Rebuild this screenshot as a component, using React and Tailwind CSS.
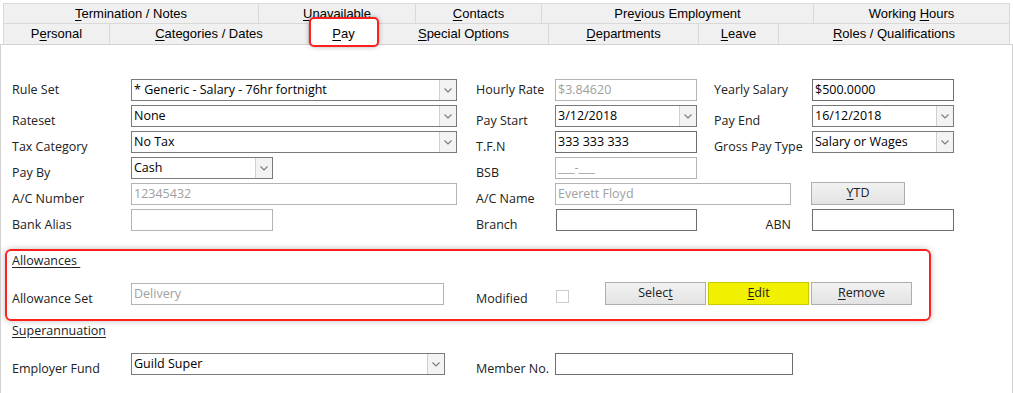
import React from 'react'

const font = { fontFamily: '"Open Sans", "Noto Sans", sans-serif' }

const Chevron = () => (
  <svg width="8" height="5" viewBox="0 0 8 5" fill="none">
    <path d="M0.5 0.5 L4 4 L7.5 0.5" stroke="#7a7a7a" strokeWidth="1.1" />
  </svg>
)

const Combo = ({ value, w }) => (
  <div className={`flex h-[22px] shrink-0 border border-[#7a7a7a] bg-white ${w}`}>
    <div className="flex-1 truncate px-[2px] text-[12.5px] leading-[19px] text-black">{value}</div>
    <div className="flex w-[17px] items-center justify-center border-l border-[#d0d0d0] bg-[#f3f3f3]">
      <Chevron />
    </div>
  </div>
)

const Field = ({ value, w, dis }) => (
  <div
    className={`h-[22px] shrink-0 border bg-white px-[2px] text-[12.5px] leading-[19px] ${w} ${
      dis ? 'border-[#b4b4b4] text-[#a0a0a0]' : 'border-[#6e6e6e] text-black'
    }`}
  >
    {value}
  </div>
)

const Label = ({ children, w, top }) => (
  <div className={`shrink-0 text-[12.5px] text-[#222] ${w} ${top ? 'pt-[1px] leading-[20px]' : 'pt-[6px] leading-[20px]'}`}>
    {children}
  </div>
)

const Button = ({ children, w, yellow }) => (
  <div
    className={`flex h-[23px] shrink-0 items-center justify-center border text-[12.5px] text-[#222] ${w} ${
      yellow
        ? 'border-[#c9c900] bg-[#f0f000]'
        : 'border-[#adadad] bg-gradient-to-b from-[#f2f2f2] to-[#e3e3e3]'
    }`}
  >
    <span>{children}</span>
  </div>
)

const Tab = ({ w, children }) => (
  <div className={`flex shrink-0 items-center justify-center border-r border-[#d9d9d9] ${w}`}>
    <span>{children}</span>
  </div>
)

const U = ({ children }) => <span className="underline underline-offset-2">{children}</span>

export default function App() {
  return (
    <div className="h-[393px] w-[1013px] overflow-hidden bg-white pt-[3px]" style={font}>
      <div
        className="ml-[3px] w-[1007px] bg-[#f0f0f0] text-[13px] text-black"
        style={{ fontFamily: '"Liberation Sans", Arial, sans-serif' }}
      >
        <div className="flex h-[21px] border-t border-b border-l border-[#d9d9d9]">
          <Tab w="w-[255px]"><U>T</U>ermination / Notes</Tab>
          <Tab w="w-[157px]"><U>U</U>navailable</Tab>
          <Tab w="w-[126px]"><U>C</U>ontacts</Tab>
          <Tab w="w-[272px]">Pre<U>v</U>ious Employment</Tab>
          <Tab w="flex-1">Working <U>H</U>ours</Tab>
        </div>
        <div className="flex h-[20px] border-l border-[#d9d9d9]">
          <Tab w="w-[106px]">P<U>e</U>rsonal</Tab>
          <Tab w="w-[199px]"><U>C</U>ategories / Dates</Tab>
          <div className="relative flex w-[70px] shrink-0 items-center justify-center border-r border-[#d9d9d9]">
            <div className="absolute top-[-7px] bottom-[-3px] left-[0px] right-[-1px] rounded-[5px] border-2 border-[#ff1f1f] bg-white shadow-[0_0_5px_rgba(0,0,0,0.3)]" />
            <span className="relative"><U>P</U>ay</span>
          </div>
          <Tab w="w-[170px]"><U>S</U>pecial Options</Tab>
          <Tab w="w-[150px]"><U>D</U>epartments</Tab>
          <Tab w="w-[80px]"><U>L</U>eave</Tab>
          <Tab w="flex-1"><U>R</U>oles / Qualifications</Tab>
        </div>
      </div>

      <div className="h-[349px] border-t border-l border-r border-[#d2d2d2] pt-[34px]">
        <div className="flex flex-col gap-[4px] pl-[11px]">
          <div className="flex h-[22px]">
            <Label w="w-[119px]" top>Rule Set</Label>
            <Combo w="w-[326px]" value="* Generic - Salary - 76hr fortnight" />
            <Label w="ml-[19px] w-[79px]" top>Hourly Rate</Label>
            <Field w="w-[142px]" dis value="$3.84620" />
            <Label w="ml-[17px] w-[98px]" top>Yearly Salary</Label>
            <Field w="w-[142px]" value="$500.0000" />
          </div>
          <div className="flex h-[22px]">
            <Label w="w-[119px]">Rateset</Label>
            <Combo w="w-[326px]" value="None" />
            <Label w="ml-[19px] w-[79px]">Pay Start</Label>
            <Combo w="w-[142px]" value="3/12/2018" />
            <Label w="ml-[17px] w-[98px]">Pay End</Label>
            <Combo w="w-[142px]" value="16/12/2018" />
          </div>
          <div className="flex h-[22px]">
            <Label w="w-[119px]">Tax Category</Label>
            <Combo w="w-[326px]" value="No Tax" />
            <Label w="ml-[19px] w-[79px]">T.F.N</Label>
            <Field w="w-[142px]" value="333 333 333" />
            <Label w="ml-[17px] w-[98px]">Gross Pay Type</Label>
            <Combo w="w-[142px]" value="Salary or Wages" />
          </div>
          <div className="flex h-[22px]">
            <Label w="w-[119px]">Pay By</Label>
            <Combo w="w-[142px]" value="Cash" />
            <Label w="ml-[203px] w-[79px]">BSB</Label>
            <Field w="w-[142px]" dis value="___-___" />
          </div>
          <div className="flex h-[22px]">
            <Label w="w-[119px]">A/C Number</Label>
            <Field w="w-[326px]" dis value="12345432" />
            <Label w="ml-[19px] w-[79px]">A/C Name</Label>
            <Field w="w-[236px]" dis value="Everett Floyd" />
            <div className="ml-[20px] -mt-[1px]">
              <Button w="w-[94px]"><U>Y</U>TD</Button>
            </div>
          </div>
          <div className="flex h-[22px]">
            <Label w="w-[119px]">Bank Alias</Label>
            <Field w="w-[142px]" dis value="" />
            <Label w="ml-[203px] w-[80px]">Branch</Label>
            <Field w="w-[141px]" value="" />
            <Label w="w-[115px] pr-[21px] text-right">ABN</Label>
            <Field w="w-[142px]" value="" />
          </div>
        </div>

        <div className="ml-[4px] mt-[18px] w-[926px] rounded-[6px] border-2 border-[#ff1f1f] px-[5px] pt-[2px] pb-[14px] shadow-[0_0_6px_rgba(0,0,0,0.25)]">
          <div className="h-[16px] text-[12.5px] leading-[16px] text-[#222]">
            <span className="underline underline-offset-2">Allowances&nbsp;</span>
          </div>
          <div className="mt-[14px] flex h-[22px]">
            <Label w="w-[119px]">Allowance Set</Label>
            <Field w="w-[313px]" dis value="Delivery" />
            <Label w="ml-[32px] w-[80px]">Modified</Label>
            <div className="mt-[7px] h-[13px] w-[13px] shrink-0 border border-[#cccccc] bg-white" />
            <div className="-mt-[1px] ml-[36px] flex gap-[2px]">
              <Button w="w-[101px]">Selec<U>t</U></Button>
              <Button w="w-[101px]" yellow><U>E</U>dit</Button>
              <Button w="w-[101px]"><U>R</U>emove</Button>
            </div>
          </div>
        </div>

        <div className="mt-[2px] h-[16px] pl-[11px] text-[12.5px] leading-[16px] text-[#222]">
          <span className="underline underline-offset-2">Superannuation</span>
        </div>
        <div className="mt-[14px] flex h-[22px] pl-[11px]">
          <Label w="w-[119px]">Employer Fund</Label>
          <Combo w="w-[314px]" value="Guild Super" />
          <Label w="ml-[31px] w-[79px]">Member No.</Label>
          <Field w="w-[238px]" value="" />
        </div>
      </div>
    </div>
  )
}
